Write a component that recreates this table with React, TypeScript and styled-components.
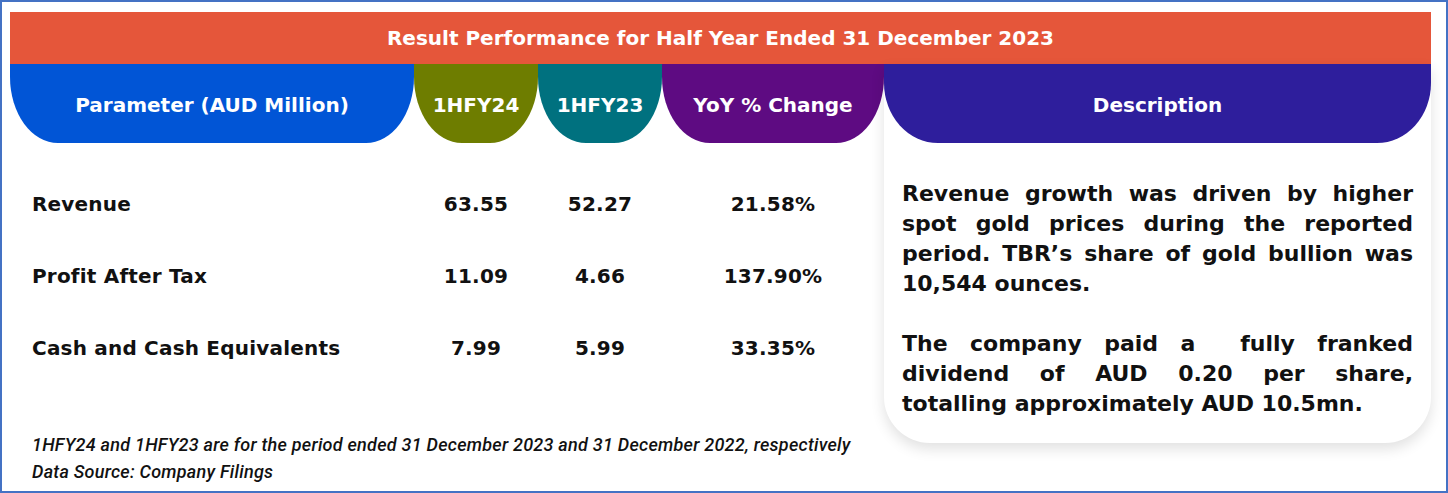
import React from "react";
import styled, { createGlobalStyle } from "styled-components";

const GlobalStyle = createGlobalStyle`
  html, body {
    margin: 0;
    padding: 0;
    background: #fff;
  }
  * {
    box-sizing: border-box;
  }
`;

const columns = "404px 124px 124px 222px";

const headers = [
  { label: "Parameter (AUD Million)", bg: "#0155d6" },
  { label: "1HFY24", bg: "#6e7d00" },
  { label: "1HFY23", bg: "#00717f" },
  { label: "YoY % Change", bg: "#5e0b82" },
];

const rows = [
  { name: "Revenue", cur: "63.55", prev: "52.27", change: "21.58%" },
  { name: "Profit After Tax", cur: "11.09", prev: "4.66", change: "137.90%" },
  { name: "Cash and Cash Equivalents", cur: "7.99", prev: "5.99", change: "33.35%" },
];

const App = () => {
  return (
    <>
      <GlobalStyle />
      <Frame>
        <Banner>Result Performance for Half Year Ended 31 December 2023</Banner>
        <Body>
          <LeftColumn>
            <HeaderRow>
              {headers.map((h) => (
                <HeadCell key={h.label} $bg={h.bg}>
                  {h.label}
                </HeadCell>
              ))}
            </HeaderRow>
            <Rows>
              {rows.map((r) => (
                <DataRow key={r.name}>
                  <Label>{r.name}</Label>
                  <Value>{r.cur}</Value>
                  <Value>{r.prev}</Value>
                  <Value>{r.change}</Value>
                </DataRow>
              ))}
            </Rows>
            <Notes>
              <Note>
                1HFY24 and 1HFY23 are for the period ended 31 December 2023 and 31 December 2022,
                respectively
              </Note>
              <Note>Data Source: Company Filings</Note>
            </Notes>
          </LeftColumn>
          <DescCard>
            <DescHeader>Description</DescHeader>
            <DescBody>
              <Para>
                Revenue growth was driven by higher spot gold prices during the reported period.
                TBR’s share of gold bullion was 10,544 ounces.
              </Para>
              <Para>
                The company paid a&nbsp; fully franked dividend of AUD 0.20 per share,
                totalling&nbsp;approximately AUD 10.5mn.
              </Para>
            </DescBody>
          </DescCard>
        </Body>
      </Frame>
    </>
  );
};

export default App;

const Frame = styled.div`
  width: 1448px;
  height: 493px;
  border: 2px solid #4472c4;
  padding: 10px 15px 0 8px;
  font-family: "DejaVu Sans", "Liberation Sans", sans-serif;
  color: #111;
  overflow: hidden;
`;

const Banner = styled.div`
  height: 52px;
  background: #e5563a;
  color: #fff;
  font-size: 20px;
  font-weight: 700;
  display: flex;
  align-items: center;
  justify-content: center;
`;

const Body = styled.div`
  display: flex;
  align-items: flex-start;
`;

const LeftColumn = styled.div`
  width: 874px;
  flex: none;
`;

const HeaderRow = styled.div`
  display: grid;
  grid-template-columns: ${columns};
  height: 79px;
`;

const HeadCell = styled.div<{ $bg: string }>`
  background: ${({ $bg }) => $bg};
  color: #fff;
  font-size: 20px;
  font-weight: 700;
  display: flex;
  align-items: center;
  justify-content: center;
  padding-top: 3px;
  border-radius: 0 0 48px 48px / 0 0 66px 66px;
`;

const Rows = styled.div`
  padding-top: 25px;
`;

const DataRow = styled.div`
  display: grid;
  grid-template-columns: ${columns};
  height: 72px;
  align-items: center;
  font-size: 20px;
  font-weight: 700;
  letter-spacing: 0.2px;
`;

const Label = styled.div`
  padding-left: 22px;
`;

const Value = styled.div`
  text-align: center;
`;

const Notes = styled.div`
  margin-top: 47px;
  padding-left: 22px;
`;

const Note = styled.div`
  font-family: Roboto, "Liberation Sans", sans-serif;
  font-style: italic;
  font-weight: 500;
  font-size: 18px;
  line-height: 27px;
  letter-spacing: 0.25px;
  white-space: nowrap;
`;

const DescCard = styled.div`
  width: 547px;
  flex: none;
  height: 379px;
  background: #fff;
  border-radius: 0 0 46px 46px;
  box-shadow: 0 6px 14px rgba(0, 0, 0, 0.12);
`;

const DescHeader = styled.div`
  height: 79px;
  background: #2e1e9c;
  color: #fff;
  font-size: 20px;
  font-weight: 700;
  display: flex;
  align-items: center;
  justify-content: center;
  padding-top: 3px;
  border-radius: 0 0 54px 54px / 0 0 60px 60px;
`;

const DescBody = styled.div`
  padding: 36px 18px 0 18px;
`;

const Para = styled.p`
  margin: 0 0 30px;
  font-size: 22px;
  font-weight: 700;
  line-height: 30px;
  text-align: justify;
`;
